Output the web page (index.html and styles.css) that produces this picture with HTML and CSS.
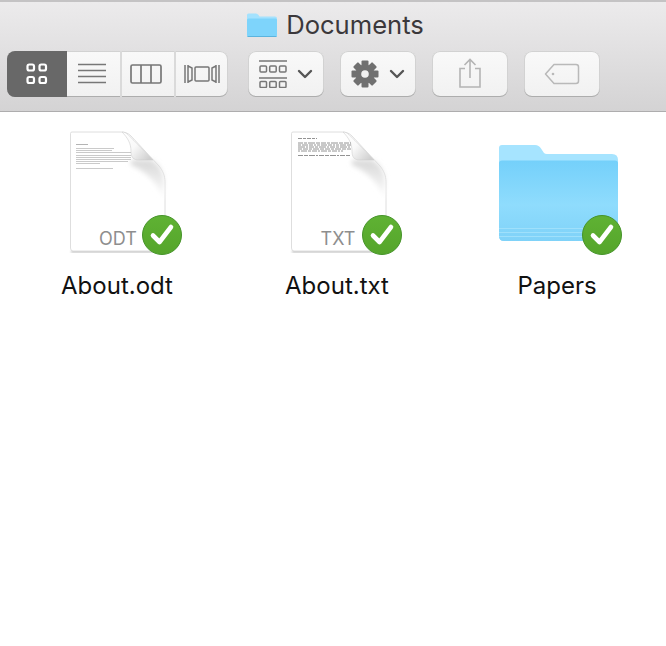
FILE: index.html
```html
<!DOCTYPE html>
<html lang="en">
<head>
<meta charset="utf-8">
<title>Documents</title>
<link rel="stylesheet" href="styles.css">
</head>
<body>
<svg class="defs" width="0" height="0" aria-hidden="true">
  <defs>
    <linearGradient id="fb" x1="0" y1="0" x2="0" y2="1"><stop offset="0" stop-color="#74d0fa"/><stop offset="0.55" stop-color="#8fdcfd"/><stop offset="1" stop-color="#7fd2f8"/></linearGradient>
    <linearGradient id="fold" x1="0" y1="0" x2="1" y2="0.8"><stop offset="0" stop-color="#ffffff"/><stop offset="0.5" stop-color="#f9f9f9"/><stop offset="1" stop-color="#d0d0d0"/></linearGradient>
    <linearGradient id="sh" x1="0" y1="0" x2="0" y2="1"><stop offset="0" stop-color="#d8d8d8"/><stop offset="1" stop-color="#ffffff"/></linearGradient>
    <linearGradient id="gb" x1="0" y1="0" x2="0" y2="1"><stop offset="0" stop-color="#5fb233"/><stop offset="1" stop-color="#55a52b"/></linearGradient>
    <filter id="soft" x="-20%" y="-20%" width="140%" height="140%"><feGaussianBlur stdDeviation="2.500"/></filter>
    <filter id="softer" x="-20%" y="-20%" width="140%" height="140%"><feGaussianBlur stdDeviation="0.800"/></filter>
    <filter id="ink" x="-5%" y="-20%" width="110%" height="140%"><feGaussianBlur stdDeviation="0.350"/></filter>
    <symbol id="badge" viewBox="0 0 42 42">
      <circle cx="21" cy="21" r="19.500" fill="url(#gb)" stroke="#46942a" stroke-width="1"/>
      <path d="M12 21.500 L18.500 28 L30 13" fill="none" stroke="#fff" stroke-width="4.600" stroke-linecap="round" stroke-linejoin="round"/>
    </symbol>
    <symbol id="page" viewBox="0 0 140 140">
      <path d="M24 131 H117 V132.500 H24 Z" fill="#aaa" filter="url(#softer)"/>
      <path d="M23.500 13.500 Q23.500 12 25 12 H74 C78 12 81 13 84 16 L112 46 C116 51 118 56 118 62 V128 Q118 131 115 131 H26 Q23.500 131 23.500 128 Z" fill="#fff" stroke="#d6d6d6" stroke-width="0.800"/>
      <path d="M84 40 H104 C112 44 117 52 117 62 V80 C110 62 100 52 84 45 Z" fill="url(#sh)" filter="url(#soft)"/>
      <path d="M75 12 C81 18 84 24 84 31 C84 37 86 40 92 40 H106 C94 28 85 18 79 13 C78 12.500 76 12 75 12 Z" fill="url(#fold)" stroke="#cecece" stroke-width="0.600"/>
    </symbol>
  </defs>
</svg>

<header class="toolbar">
  <div class="title">
    <svg class="title-icon" width="32" height="26" viewBox="0 0 32 26">
      <path d="M1 3 Q1 1.500 2.500 1.500 H10 Q11.500 1.500 12.500 3 L13.500 4.500 H29 Q31 4.500 31 6.500 V23 Q31 25 29 25 H3 Q1 25 1 23 Z" fill="#a4e2fe"/>
      <path d="M1 8 Q1 6.500 2.500 6.500 H29.500 Q31 6.500 31 8 V23 Q31 25 29 25 H3 Q1 25 1 23 Z" fill="#7ed4fb"/>
      <path d="M1.500 24.500 H30.500" stroke="#5bb4de" stroke-width="1"/>
    </svg>
    <span class="title-text">Documents</span>
  </div>
  <div class="controls">
    <div class="segments">
      <div class="seg seg-on">
        <svg width="24" height="22" viewBox="0 0 24 22" fill="none" stroke="#fff" stroke-width="2.200"><rect x="2.500" y="1.500" width="6.500" height="6" rx="1.800"/><rect x="14.500" y="1.500" width="6.500" height="6" rx="1.800"/><rect x="2.500" y="14" width="6.500" height="6" rx="1.800"/><rect x="14.500" y="14" width="6.500" height="6" rx="1.800"/></svg>
      </div>
      <div class="seg seg-list">
        <svg width="30" height="22" viewBox="0 0 30 22" stroke="#777" stroke-width="1.500"><path d="M1 1.500H29M1 7.500H29M1 13.500H29M1 19.500H29"/></svg>
      </div>
      <div class="seg seg-col">
        <svg width="32" height="20" viewBox="0 0 32 20" fill="none" stroke="#777" stroke-width="1.700"><rect x="1" y="1" width="30" height="18" rx="1.500"/><path d="M11 1V19M21 1V19"/></svg>
      </div>
      <div class="seg seg-flow">
        <svg width="36" height="20" viewBox="0 0 36 20" fill="none" stroke="#777" stroke-width="1.500"><rect x="11" y="3" width="14" height="14" rx="1"/><path d="M1 1V19M4 1V19M32 1V19M35 1V19M4 2L8 4V16L4 18M32 2L28 4V16L32 18"/></svg>
      </div>
    </div>
    <div class="btn">
      <svg width="28" height="28" viewBox="0 0 28 28" fill="none" stroke="#777" stroke-width="1.500"><path d="M0 1H28M0 18H28" stroke-width="1.600"/><rect x="1" y="6" width="6.500" height="6" rx="1"/><rect x="10.700" y="6" width="6.500" height="6" rx="1"/><rect x="20.500" y="6" width="6.500" height="6" rx="1"/><rect x="1" y="21.500" width="6.500" height="6" rx="1"/><rect x="10.700" y="21.500" width="6.500" height="6" rx="1"/><rect x="20.500" y="21.500" width="6.500" height="6" rx="1"/></svg>
      <svg class="chev" width="16" height="10" viewBox="0 0 16 10" fill="none" stroke="#555" stroke-width="2.400" stroke-linecap="round" stroke-linejoin="round"><path d="M2 2L8 8L14 2"/></svg>
    </div>
    <div class="btn">
      <svg width="28" height="28" viewBox="0 0 28 28"><g fill="#707070"><circle cx="14" cy="14" r="9.500"/><rect x="10.500" y="0.500" width="7" height="27" rx="1"/><rect x="10.500" y="0.500" width="7" height="27" rx="1" transform="rotate(45 14 14)"/><rect x="10.500" y="0.500" width="7" height="27" rx="1" transform="rotate(90 14 14)"/><rect x="10.500" y="0.500" width="7" height="27" rx="1" transform="rotate(135 14 14)"/></g><circle cx="14" cy="14" r="3.800" fill="#f1f1f1"/></svg>
      <svg class="chev" width="16" height="10" viewBox="0 0 16 10" fill="none" stroke="#555" stroke-width="2.400" stroke-linecap="round" stroke-linejoin="round"><path d="M2 2L8 8L14 2"/></svg>
    </div>
    <div class="btn">
      <svg class="share" width="24" height="30" viewBox="0 0 24 30" fill="none" stroke="#b4b4b4" stroke-width="1.600"><path d="M7 10.500H2V29H22V10.500H17"/><path d="M12 20V1.500M6.500 7L12 1.500L17.500 7"/></svg>
    </div>
    <div class="btn">
      <svg width="36" height="22" viewBox="0 0 36 22" fill="none" stroke="#b9b9b9" stroke-width="1.500"><path d="M10 1.500H32Q34.500 1.500 34.500 4V18Q34.500 20.500 32 20.500H10L1.500 11Z" stroke-linejoin="round"/><circle cx="9" cy="11" r="1.300" fill="#b9b9b9" stroke="none"/></svg>
    </div>
  </div>
</header>

<main class="grid">
  <figure class="item">
    <svg class="icon" width="140" height="140" viewBox="0 0 140 140">
      <use href="#page" x="0" y="0" width="140" height="140"/>
      <g fill="#b4b4b4" filter="url(#ink)">
        <rect x="29" y="24" width="12" height="1"/>
        <rect x="29" y="28" width="38" height="0.700"/><rect x="29" y="30" width="36" height="0.700"/><rect x="29" y="32" width="55" height="0.700"/>
        <rect x="29" y="35" width="55" height="0.700"/><rect x="29" y="37" width="55" height="0.700"/><rect x="29" y="39" width="55" height="0.700"/><rect x="29" y="41" width="52" height="0.700"/><rect x="29" y="43" width="24" height="0.700"/>
        <rect x="29" y="48" width="37" height="0.700"/>
      </g>
      <text class="ext" x="71" y="125">ODT</text>
      <use href="#badge" x="94" y="94" width="42" height="42"/>
    </svg>
    <figcaption class="label">About.odt</figcaption>
  </figure>
  <figure class="item">
    <svg class="icon" width="140" height="140" viewBox="0 0 140 140">
      <use href="#page" x="1" y="0" width="140" height="140"/>
      <g fill="none" stroke="#777" stroke-width="0.800" filter="url(#ink)">
        <path d="M31 18.500H50" stroke-dasharray="4 1 3 1"/>
        <path d="M31 23H84" stroke-dasharray="5 1 3 1 7 1 4 1"/>
        <path d="M31 25H84" stroke-dasharray="3 1 6 1 4 1 2 1"/>
        <path d="M31 27H84" stroke-dasharray="7 1 2 1 5 1 3 1"/>
        <path d="M31 29H84" stroke-dasharray="4 1 5 1 3 1 6 1"/>
        <path d="M31 31H76" stroke-dasharray="2 1 6 1 3 1 5 1"/>
        <path d="M31 35.500H84" stroke-dasharray="5 1 4 1 6 1 2 1"/>
      </g>
      <text class="ext" x="71" y="125">TXT</text>
      <use href="#badge" x="94" y="94" width="42" height="42"/>
    </svg>
    <figcaption class="label">About.txt</figcaption>
  </figure>
  <figure class="item">
    <svg class="icon" width="140" height="140" viewBox="0 0 140 140">
      <path d="M12 28 Q12 25 15 25 H48 Q52 25 54 28.500 L57 33 Q58 34 60 34 H125 Q131 34 131 40 V116 Q131 121 126 121 H17 Q12 121 12 116 Z" fill="#a6e4ff"/>
      <path d="M12 43 Q12 40.500 15 40.500 H128 Q131 40.500 131 43 V116 Q131 121 126 121 H17 Q12 121 12 116 Z" fill="url(#fb)"/>
      <path d="M12 108.500H131M12 112.500H131M12 116.500H131" stroke="#9fe0fb" stroke-width="1" fill="none"/>
      <use href="#badge" x="94" y="94" width="42" height="42"/>
    </svg>
    <figcaption class="label">Papers</figcaption>
  </figure>
</main>
</body>
</html>
```

FILE: styles.css
```css
* { box-sizing: border-box; }

html, body { margin: 0; padding: 0; }

body {
  width: 666px;
  height: 646px;
  overflow: hidden;
  background: #fff;
  font-family: "Inter", "Liberation Sans", sans-serif;
}

.defs { display: block; height: 0; }

.toolbar {
  height: 112px;
  border-top: 2px solid #c4c3c4;
  border-bottom: 1px solid #aeadae;
  background: linear-gradient(#ecebec, #d4d3d4);
  padding: 8px 7px 0;
}

.title {
  display: flex;
  justify-content: center;
  align-items: center;
  gap: 8px;
  height: 30px;
  padding-left: 4px;
}

.title-text {
  font-size: 25.6px;
  color: #3b383b;
  line-height: 30px;
}

.controls {
  display: flex;
  gap: 16px;
  margin-top: 11px;
}

.segments {
  display: flex;
  height: 46px;
  width: 221px;
  margin-right: 4px;
  border-radius: 8px;
  overflow: hidden;
  background: linear-gradient(#f9f9f9, #f1f1f1);
  box-shadow: inset 0 -1px 0 #adadad, inset 0 0 0 1px #d2d2d2;
}

.seg {
  display: flex;
  align-items: center;
  justify-content: center;
  height: 46px;
}

.seg-on {
  width: 60px;
  background: #686868;
}

.seg-list {
  width: 53px;
  padding-right: 3px;
}

.seg-col {
  width: 54px;
  padding-right: 2px;
  box-shadow: inset 2px 0 0 #dadada;
}

.seg-flow {
  width: 54px;
  padding-left: 1px;
  box-shadow: inset 2px 0 0 #dadada;
}

.btn {
  display: flex;
  align-items: center;
  justify-content: center;
  gap: 10px;
  width: 76px;
  height: 46px;
  border-radius: 8px;
  background: linear-gradient(#f9f9f9, #f1f1f1);
  box-shadow: inset 0 -1px 0 #adadad, inset 0 0 0 1px #d2d2d2;
}

.share { margin-bottom: 3px; }

.grid {
  display: grid;
  grid-template-columns: repeat(3, 220px);
  padding: 8px 0 0 7px;
}

.item {
  display: flex;
  flex-direction: column;
  align-items: center;
  margin: 0;
}

.icon { display: block; }

.ext {
  font-family: "Inter", "Liberation Sans", sans-serif;
  font-size: 18px;
  fill: #8e8e8e;
  text-anchor: middle;
}

.label {
  margin-top: 11px;
  font-size: 24px;
  line-height: 30px;
  color: #111;
}
```
